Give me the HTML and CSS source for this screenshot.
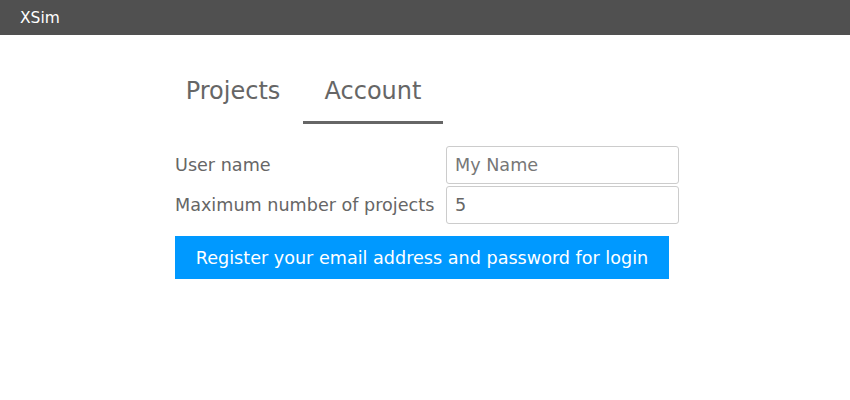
FILE: index.html
```html
<!DOCTYPE html>
<html>
<head>
<meta charset="utf-8">
<link rel="stylesheet" href="styles.css">
</head>
<body>
<header class="topbar"><span class="brand">XSim</span></header>
<main class="content">
  <nav class="tabs">
    <div class="tab">Projects</div>
    <div class="tab active">Account</div>
  </nav>
  <form class="form">
    <div class="row">
      <label class="label">User name</label>
      <input class="field" type="text" placeholder="My Name">
    </div>
    <div class="row">
      <label class="label">Maximum number of projects</label>
      <input class="field" type="text" value="5">
    </div>
    <button class="btn" type="button">Register your email address and password for login</button>
  </form>
</main>
</body>
</html>
```
FILE: styles.css
```css
html, body {
  margin: 0;
  padding: 0;
  background: #fff;
  font-family: "DejaVu Sans", "Noto Sans", sans-serif;
  color: #666;
}
.topbar {
  height: 35px;
  background: #505050;
  display: flex;
  align-items: center;
  padding-left: 20px;
}
.brand {
  color: #fff;
  font-size: 15.5px;
}
.content {
  padding-left: 163px;
}
.tabs {
  display: flex;
  margin-top: 35px;
}
.tab {
  width: 140px;
  text-align: center;
  font-size: 24px;
  height: 54px;
  line-height: 42px;
  box-sizing: border-box;
  color: #666;
}
.tab.active {
  border-bottom: 3px solid #666;
}
.form {
  margin-left: 12px;
  margin-top: 22px;
  width: 504px;
}
.row {
  display: flex;
  align-items: center;
  margin-bottom: 2px;
}
.label {
  width: 271px;
  font-size: 17.6px;
  color: #666;
}
.field {
  width: 233px;
  height: 38px;
  box-sizing: border-box;
  border: 1px solid #ccc;
  border-radius: 3px;
  padding: 0 8px;
  font-family: inherit;
  font-size: 17.6px;
  color: #666;
  outline: none;
}
.field::placeholder {
  color: #777;
}
.btn {
  margin-top: 10px;
  width: 494px;
  height: 43px;
  border: none;
  background: #0099ff;
  color: #fff;
  font-family: inherit;
  font-size: 17.6px;
  padding: 0;
}
```
